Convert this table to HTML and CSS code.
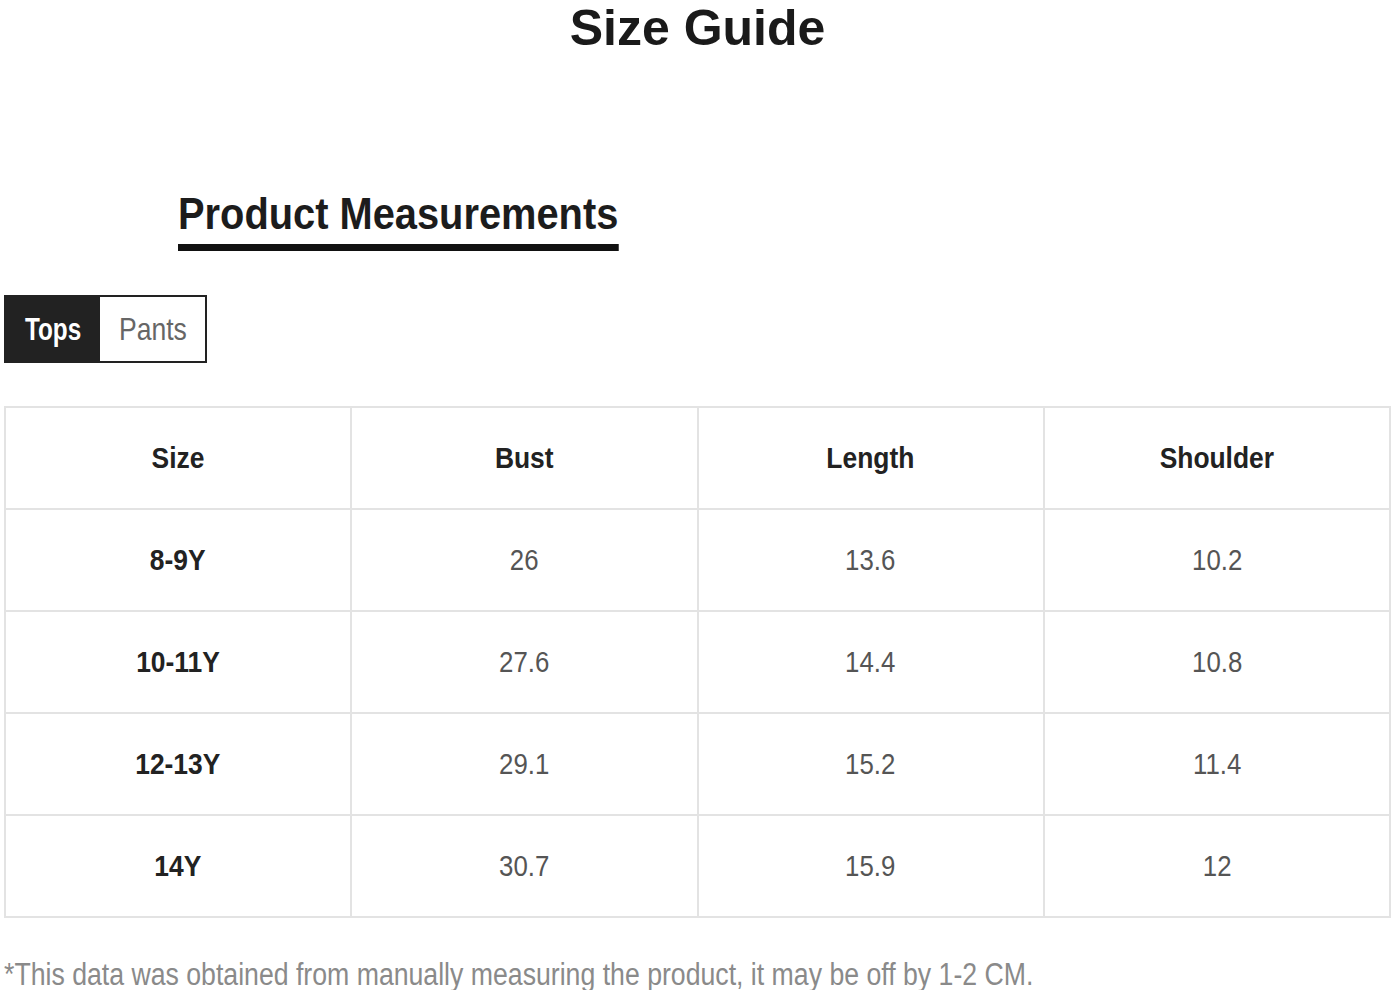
FILE: index.html
```html
<!DOCTYPE html>
<html lang="en">
<head>
<meta charset="utf-8">
<title>Size Guide</title>
<link rel="stylesheet" href="styles.css">
</head>
<body>
<div class="page">
  <h1 class="title">Size Guide</h1>
  <h2 class="section-title"><span class="section-text">Product Measurements</span></h2>
  <div class="tabs">
    <div class="tab tab-active"><span class="tab-label">Tops</span></div>
    <div class="tab"><span class="tab-label">Pants</span></div>
  </div>
  <table class="size-table">
    <thead>
      <tr><th><span class="cell-text">Size</span></th><th><span class="cell-text">Bust</span></th><th><span class="cell-text">Length</span></th><th><span class="cell-text">Shoulder</span></th></tr>
    </thead>
    <tbody>
      <tr><td class="size"><span class="cell-text">8-9Y</span></td><td><span class="cell-text">26</span></td><td><span class="cell-text">13.6</span></td><td><span class="cell-text">10.2</span></td></tr>
      <tr><td class="size"><span class="cell-text">10-11Y</span></td><td><span class="cell-text">27.6</span></td><td><span class="cell-text">14.4</span></td><td><span class="cell-text">10.8</span></td></tr>
      <tr><td class="size"><span class="cell-text">12-13Y</span></td><td><span class="cell-text">29.1</span></td><td><span class="cell-text">15.2</span></td><td><span class="cell-text">11.4</span></td></tr>
      <tr><td class="size"><span class="cell-text">14Y</span></td><td><span class="cell-text">30.7</span></td><td><span class="cell-text">15.9</span></td><td><span class="cell-text">12</span></td></tr>
    </tbody>
  </table>
  <p class="note"><span class="note-text">*This data was obtained from manually measuring the product, it may be off by 1-2 CM.</span></p>
</div>
</body>
</html>
```

FILE: styles.css
```css
html, body {
  margin: 0;
  padding: 0;
  background: #ffffff;
}

body {
  font-family: "Liberation Sans", Arial, sans-serif;
  color: #222222;
}

.page {
  padding: 0 4px;
}

.title {
  margin: 0;
  text-align: center;
  font-weight: 700;
  font-size: 50px;
  line-height: 56px;
  color: #1a1a1a;
}

.section-title {
  margin: 136px 0 0 174px;
  font-size: 44px;
  line-height: 44px;
  font-weight: 700;
  color: #1c1c1c;
  white-space: nowrap;
}

.section-text {
  display: inline-block;
  padding-bottom: 8px;
  border-bottom: 7px solid #111111;
  transform: scaleX(0.905);
  transform-origin: left center;
}

.tabs {
  display: inline-flex;
  margin-top: 44px;
  border: 2px solid #222222;
  height: 64px;
}

.tab {
  display: flex;
  align-items: center;
  justify-content: center;
  font-size: 32px;
  color: #666666;
  width: 105px;
}

.tab-label {
  display: inline-block;
  transform: scaleX(0.83);
}

.tab-active {
  width: 94px;
  background: #222222;
  color: #ffffff;
  font-weight: 700;
}

.tab-active .tab-label {
  transform: scaleX(0.76);
}

.size-table {
  margin-top: 43px;
  width: 1387px;
  border-collapse: collapse;
  table-layout: fixed;
  border: 2px solid #e3e3e3;
}

.size-table th,
.size-table td {
  border: 2px solid #e3e3e3;
  height: 100px;
  padding: 0;
  text-align: center;
  vertical-align: middle;
  font-size: 29px;
}

.cell-text {
  display: inline-block;
  transform: scaleX(0.89);
}

.size-table th {
  font-weight: 700;
  color: #222222;
}

.size-table th .cell-text,
.size-table td.size .cell-text {
  transform: scaleX(0.91);
}

.size-table td {
  color: #555555;
}

.size-table td.size {
  font-weight: 700;
  color: #222222;
}

.note {
  margin: 41px 0 0;
  font-size: 31px;
  line-height: 31px;
  color: #8a8a8a;
  white-space: nowrap;
}

.note-text {
  display: inline-block;
  transform: scaleX(0.86);
  transform-origin: left center;
}
```
